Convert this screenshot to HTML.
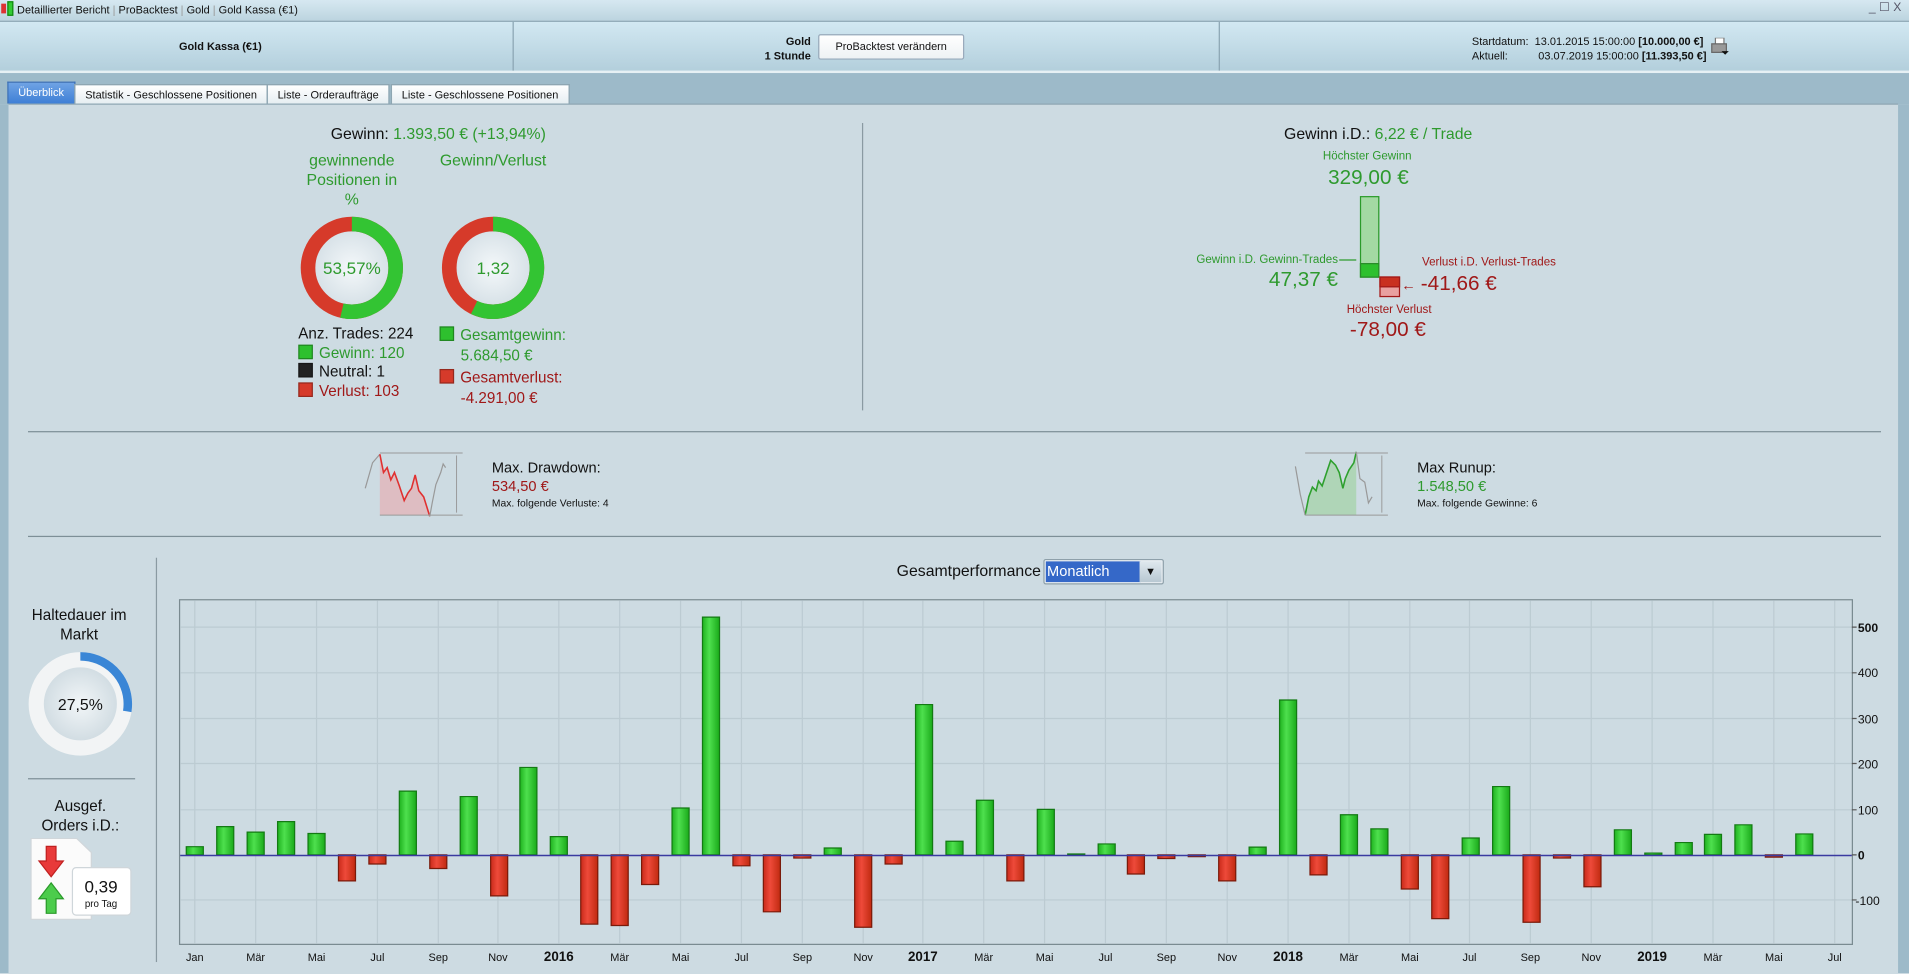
<!DOCTYPE html>
<html><head><meta charset="utf-8">
<style>
html,body{margin:0;padding:0;width:1909px;height:973px;overflow:hidden;background:#cddbe2}
#s{position:absolute;left:0;top:0;width:1568px;height:799px;transform:scale(1.21747,1.21777);transform-origin:0 0;font-family:"Liberation Sans",Arial,sans-serif;color:#111;background:#cddbe2}
.a{position:absolute;white-space:nowrap}
.g{color:#2e9a2e}.r{color:#a01818}
.c{transform:translateX(-50%);text-align:center}
.tab{position:absolute;top:69px;height:16px;font-size:9px;line-height:16px;padding:0 8px;background:linear-gradient(#fff,#e6eef2);border:1px solid #8ea6b2;border-bottom:none;box-sizing:border-box}
.sq{display:inline-block;width:12px;height:12px;vertical-align:-1px;margin-right:5px;border:1px solid rgba(0,0,0,.3);box-sizing:border-box}
</style></head><body>
<div id="s">
<div class="a" style="left:0;top:0;width:1568px;height:17px;background:linear-gradient(#d6e8f1,#bcd4df);border-bottom:1px solid #8aa4b2"></div>
<div class="a" style="left:1px;top:3px;width:4px;height:8px;background:#d33"></div>
<div class="a" style="left:6px;top:1px;width:5px;height:12px;border:1px solid #181;background:#3c3;box-sizing:border-box"></div>
<div class="a" style="left:14px;top:3px;font-size:9px">Detaillierter Bericht <span style="color:#999">|</span> ProBacktest <span style="color:#999">|</span> Gold <span style="color:#999">|</span> Gold Kassa (€1)</div>
<div class="a" style="left:1535px;top:1px;font-size:10px;color:#556">_ ☐ X</div>
<div class="a" style="left:0;top:18px;width:1568px;height:40px;background:linear-gradient(#d2e8f2,#b3cfdc);border-bottom:2px solid #e6f0f4"></div>
<div class="a" style="left:421px;top:18px;width:1px;height:40px;background:#8aa4b2"></div>
<div class="a" style="left:1001px;top:18px;width:1px;height:40px;background:#8aa4b2"></div>
<div class="a c" style="left:181px;top:33px;font-size:9px;font-weight:bold">Gold Kassa (€1)</div>
<div class="a" style="left:628px;top:28px;font-size:9px;font-weight:bold;text-align:right;line-height:12px">Gold<br>1 Stunde</div>
<div class="a" style="left:672px;top:28px;width:118px;height:19px;border:1px solid #9ab;border-radius:2px;background:linear-gradient(#fff,#eef2f4);font-size:9px;line-height:19px;text-align:center">ProBacktest verändern</div>
<div class="a" style="left:1209px;top:28px;font-size:9px;line-height:12px">Startdatum:&nbsp; 13.01.2015 15:00:00 <b>[10.000,00 €]</b><br>Aktuell:&nbsp;&nbsp;&nbsp;&nbsp;&nbsp;&nbsp;&nbsp;&nbsp;&nbsp; 03.07.2019 15:00:00 <b>[11.393,50 €]</b></div>
<svg class="a" style="left:1405px;top:31px" width="16" height="16"><rect x="4" y="0" width="7" height="6" fill="#fff" stroke="#777"/><rect x="1" y="5" width="12" height="7" fill="#999" stroke="#666"/><path d="M9 11h6l-3 3z" fill="#111"/></svg>
<div class="a" style="left:0;top:60px;width:1568px;height:26px;background:#9dbac9"></div>
<div class="a" style="left:0;top:86px;width:7px;height:713px;background:#9dbac9"></div>
<div class="a" style="left:1559px;top:86px;width:9px;height:713px;background:#9dbac9"></div>
<div class="tab" style="left:6px;top:67px;height:18px;background:linear-gradient(#6fa3e4,#3e7fd6);color:#fff;border-color:#3a6fb8">Überblick</div>
<div class="tab" style="left:61px">Statistik - Geschlossene Positionen</div>
<div class="tab" style="left:219px">Liste - Orderaufträge</div>
<div class="tab" style="left:321px">Liste - Geschlossene Positionen</div>
<div class="a" style="left:7px;top:85px;width:1552px;height:714px;background:#cddbe2;border-top:1px solid #8ea6b2"></div>

<div class="a c" style="left:360px;top:102px;font-size:13px">Gewinn: <span class="g">1.393,50 € (+13,94%)</span></div>
<div class="a c g" style="left:289px;top:124px;font-size:13px;line-height:16px">gewinnende<br>Positionen in<br>%</div>
<div class="a c g" style="left:405px;top:124px;font-size:13px">Gewinn/Verlust</div>
<svg class="a" style="left:240px;top:171px" width="220" height="100">
<defs><radialGradient id="in"><stop offset="0" stop-color="#f4f8fa"/><stop offset="1" stop-color="#d8e2e8"/></radialGradient></defs>
<g transform="translate(49,49)">
<circle r="30" fill="url(#in)"/>
<circle r="36" fill="none" stroke="#d63a2a" stroke-width="12"/>
<circle r="36" fill="none" stroke="#33c433" stroke-width="12" stroke-dasharray="121.2 300" transform="rotate(-90)"/>
<text y="5" text-anchor="middle" font-size="14" fill="#2e9a2e" font-family="Liberation Sans">53,57%</text></g>
<g transform="translate(165,49)">
<circle r="30" fill="url(#in)"/>
<circle r="36" fill="none" stroke="#d63a2a" stroke-width="12"/>
<circle r="36" fill="none" stroke="#33c433" stroke-width="12" stroke-dasharray="129 300" transform="rotate(-90)"/>
<text y="5" text-anchor="middle" font-size="14" fill="#2e9a2e" font-family="Liberation Sans">1,32</text></g>
</svg>
<div class="a" style="left:245px;top:267px;font-size:12.5px;line-height:15.7px">Anz. Trades: 224<br><span class="sq" style="background:#2ec02e"></span><span class="g">Gewinn: 120</span><br><span class="sq" style="background:#222"></span>Neutral: 1<br><span class="sq" style="background:#d63a2a"></span><span class="r">Verlust: 103</span></div>
<div class="a" style="left:361px;top:267px;font-size:12.5px;line-height:16.5px"><span class="sq" style="background:#2ec02e"></span><span class="g">Gesamtgewinn:</span><br><span class="g">&nbsp;&nbsp;&nbsp;&nbsp;&nbsp;5.684,50 €</span></div>
<div class="a" style="left:361px;top:302px;font-size:12.5px;line-height:16.5px"><span class="sq" style="background:#d63a2a"></span><span class="r">Gesamtverlust:</span><br><span class="r">&nbsp;&nbsp;&nbsp;&nbsp;&nbsp;-4.291,00 €</span></div>
<div class="a" style="left:708px;top:101px;width:1px;height:236px;background:#8a9aa2"></div>

<div class="a c" style="left:1132px;top:102px;font-size:13px">Gewinn i.D.: <span class="g">6,22 € / Trade</span></div>
<div class="a c g" style="left:1123px;top:123px;font-size:9.5px">Höchster Gewinn</div>
<div class="a c g" style="left:1124px;top:136px;font-size:17px">329,00 €</div>
<div class="a" style="left:1117px;top:161px;width:16px;height:67px;background:#a3d9a3;border:1px solid #2a9a2a;box-sizing:border-box"></div>
<div class="a" style="left:1117px;top:216px;width:16px;height:12px;background:#2ec02e;border:1px solid #2a8a2a;box-sizing:border-box"></div>
<div class="a" style="left:1133px;top:227px;width:17px;height:17px;background:#e9a0a0;border:1px solid #a01818;box-sizing:border-box"></div>
<div class="a" style="left:1133px;top:227px;width:17px;height:9px;background:#c93020;border:1px solid #a01818;box-sizing:border-box"></div>
<div class="a g" style="right:469px;top:208px;font-size:9.5px">Gewinn i.D. Gewinn-Trades</div>
<div class="a" style="left:1100px;top:213px;width:14px;height:1px;background:#2a9a2a"></div>
<div class="a g" style="right:469px;top:220px;font-size:17px">47,37 €</div>
<div class="a r" style="left:1168px;top:210px;font-size:9.5px">Verlust i.D. Verlust-Trades</div>
<div class="a r" style="left:1151px;top:227px;font-size:12px">←</div>
<div class="a r" style="left:1167px;top:223px;font-size:17px">-41,66 €</div>
<div class="a c r" style="left:1141px;top:249px;font-size:9.5px">Höchster Verlust</div>
<div class="a c r" style="left:1140px;top:261px;font-size:17px">-78,00 €</div>

<div class="a" style="left:23px;top:354px;width:1522px;height:1px;background:#7d8f97"></div>
<div class="a" style="left:23px;top:440px;width:1522px;height:1px;background:#7d8f97"></div>

<svg class="a" style="left:298px;top:368px" width="100" height="60">
<path d="M14 5 L17 20 L20 16 L23 26 L26 20 L30 31 L34 43 L37 37 L40 33 L43 22 L46 35 L50 40 L55 55 L14 55 Z" fill="#e1b7bc" opacity=".85"/>
<path d="M2 33 L8 12 L14 5" fill="none" stroke="#999" stroke-width="1"/>
<path d="M14 5 L17 20 L20 16 L23 26 L26 20 L30 31 L34 43 L37 37 L40 33 L43 22 L46 35 L50 40 L55 56" fill="none" stroke="#e03030" stroke-width="1.3"/>
<path d="M55 56 L57 45 L60 30 L64 20 L66 13 L68 16" fill="none" stroke="#999" stroke-width="1"/>
<path d="M14 4 H82 M14 55 H82 M77 6 V53" stroke="#999" fill="none" stroke-width=".8"/>
</svg>
<div class="a" style="left:404px;top:377px;font-size:12px">Max. Drawdown:</div>
<div class="a r" style="left:404px;top:392px;font-size:12px">534,50 €</div>
<div class="a" style="left:404px;top:408px;font-size:8.5px">Max. folgende Verluste: 4</div>

<svg class="a" style="left:1058px;top:368px" width="100" height="60">
<path d="M14 55 L17 40 L20 32 L23 35 L25 27 L28 31 L31 22 L35 10 L39 14 L42 20 L45 33 L47 25 L50 18 L54 12 L56 3 L56 55 Z" fill="#a8d3ad" opacity=".8"/>
<path d="M14 55 L17 40 L20 32 L23 35 L25 27 L28 31 L31 22 L35 10 L39 14 L42 20 L45 33 L47 25 L50 18 L54 12 L56 3" fill="none" stroke="#2ea02e" stroke-width="1.3"/>
<path d="M56 3 L59 25 L63 28 L66 45 L69 40 M6 15 L10 38 L14 55" fill="none" stroke="#999" stroke-width="1"/>
<path d="M14 4 H82 M14 55 H82 M77 6 V53" stroke="#999" fill="none" stroke-width=".8"/>
</svg>
<div class="a" style="left:1164px;top:377px;font-size:12px">Max Runup:</div>
<div class="a g" style="left:1164px;top:392px;font-size:12px">1.548,50 €</div>
<div class="a" style="left:1164px;top:408px;font-size:8.5px">Max. folgende Gewinne: 6</div>

<div class="a" style="left:128px;top:458px;width:1px;height:332px;background:#8a9aa2"></div>
<div class="a c" style="left:65px;top:497px;font-size:12.5px;line-height:16px">Haltedauer im<br>Markt</div>
<svg class="a" style="left:22px;top:534px" width="90" height="90">
<defs><radialGradient id="in2"><stop offset="0" stop-color="#f2f6f8"/><stop offset="1" stop-color="#d2dde3"/></radialGradient></defs>
<g transform="translate(44,44)">
<circle r="36" fill="none" stroke="#f2f4f5" stroke-width="13"/>
<circle r="30" fill="url(#in2)"/>
<circle r="39" fill="none" stroke="#3a86d6" stroke-width="7" stroke-dasharray="67.4 300" transform="rotate(-90)"/>
<text y="5" text-anchor="middle" font-size="13" fill="#111" font-family="Liberation Sans">27,5%</text></g></svg>
<div class="a" style="left:23px;top:639px;width:88px;height:1px;background:#7d8f97"></div>
<div class="a c" style="left:66px;top:654px;font-size:12.5px;line-height:16px">Ausgef.<br>Orders i.D.:</div>
<svg class="a" style="left:25px;top:688px" width="86" height="70">
<path d="M0.5 0.5 H38 L50 12 V67 H0.5 Z" fill="#fbfbfb" stroke="#d0d6da"/>
<path d="M13 7 H21 V19 H27 L17 32 L7 19 H13 Z" fill="#e83a3a" stroke="#c02020"/>
<path d="M13 62 H21 V50 H27 L17 37 L7 50 H13 Z" fill="#4ccc4c" stroke="#2a9a2a"/>
<rect x="34.5" y="24.5" width="48" height="39" rx="3" fill="#fff" stroke="#cfd6da"/>
<text x="58" y="45" text-anchor="middle" font-size="14" fill="#111" font-family="Liberation Sans">0,39</text>
<text x="58" y="57" text-anchor="middle" font-size="8" fill="#111" font-family="Liberation Sans">pro Tag</text>
</svg>

<div class="a" style="right:713px;top:461px;font-size:13px">Gesamtperformance</div>
<div class="a" style="left:857px;top:459px;width:99px;height:21px;border:1px solid #8ea0aa;border-radius:2px;background:#e8eef2;box-sizing:border-box"></div>
<div class="a" style="left:859px;top:461px;width:77px;height:17px;background:#3568c8;color:#fff;font-size:12px;line-height:17px;padding-left:1px">Monatlich</div>
<div class="a" style="left:936px;top:461px;width:18px;height:17px;background:linear-gradient(#dfe8ee,#b8c8d2);font-size:9px;line-height:17px;text-align:center">▼</div>

<svg class="a" style="left:0;top:0" width="1568" height="799">
<defs>
<linearGradient id="gg" x1="0" x2="1"><stop offset="0" stop-color="#1fb21f"/><stop offset=".4" stop-color="#4ee04e"/><stop offset="1" stop-color="#1aaa1a"/></linearGradient>
<linearGradient id="rg" x1="0" x2="1"><stop offset="0" stop-color="#c92a1a"/><stop offset=".4" stop-color="#ee4a3a"/><stop offset="1" stop-color="#c02a10"/></linearGradient>
</defs>
<rect x="147.5" y="492.5" width="1374" height="283" fill="#cddbe2" stroke="#7a8a90"/>
<g stroke="#bccbd2" stroke-width="1">
<path d="M148 515H1521M148 552.5H1521M148 590H1521M148 627H1521M148 665H1521M148 739H1521"/>
<path d="M160 493V775M210 493V775M260 493V775M310 493V775M360 493V775M409 493V775M459 493V775M509 493V775M559 493V775M609 493V775M659 493V775M709 493V775M758 493V775M808 493V775M858 493V775M908 493V775M958 493V775M1008 493V775M1058 493V775M1108 493V775M1158 493V775M1207 493V775M1257 493V775M1307 493V775M1357 493V775M1407 493V775M1457 493V775M1507 493V775"/>
</g>
<g transform="translate(0,702) scale(1,-0.374)" stroke-width="1">
<g fill="url(#gg)" stroke="#137a13">
<rect vector-effect="non-scaling-stroke" x="153" y="0" width="14" height="18"/>
<rect vector-effect="non-scaling-stroke" x="178" y="0" width="14" height="62"/>
<rect vector-effect="non-scaling-stroke" x="203" y="0" width="14" height="50"/>
<rect vector-effect="non-scaling-stroke" x="228" y="0" width="14" height="73"/>
<rect vector-effect="non-scaling-stroke" x="253" y="0" width="14" height="47"/>
<rect vector-effect="non-scaling-stroke" x="328" y="0" width="14" height="140"/>
<rect vector-effect="non-scaling-stroke" x="378" y="0" width="14" height="128"/>
<rect vector-effect="non-scaling-stroke" x="427" y="0" width="14" height="192"/>
<rect vector-effect="non-scaling-stroke" x="452" y="0" width="14" height="40"/>
<rect vector-effect="non-scaling-stroke" x="552" y="0" width="14" height="103"/>
<rect vector-effect="non-scaling-stroke" x="577" y="0" width="14" height="522"/>
<rect vector-effect="non-scaling-stroke" x="677" y="0" width="14" height="15"/>
<rect vector-effect="non-scaling-stroke" x="752" y="0" width="14" height="330"/>
<rect vector-effect="non-scaling-stroke" x="777" y="0" width="14" height="30"/>
<rect vector-effect="non-scaling-stroke" x="802" y="0" width="14" height="120"/>
<rect vector-effect="non-scaling-stroke" x="852" y="0" width="14" height="100"/>
<rect vector-effect="non-scaling-stroke" x="877" y="0" width="14" height="2"/>
<rect vector-effect="non-scaling-stroke" x="902" y="0" width="14" height="24"/>
<rect vector-effect="non-scaling-stroke" x="1026" y="0" width="14" height="17"/>
<rect vector-effect="non-scaling-stroke" x="1051" y="0" width="14" height="340"/>
<rect vector-effect="non-scaling-stroke" x="1101" y="0" width="14" height="88"/>
<rect vector-effect="non-scaling-stroke" x="1126" y="0" width="14" height="57"/>
<rect vector-effect="non-scaling-stroke" x="1201" y="0" width="14" height="37"/>
<rect vector-effect="non-scaling-stroke" x="1226" y="0" width="14" height="150"/>
<rect vector-effect="non-scaling-stroke" x="1326" y="0" width="14" height="55"/>
<rect vector-effect="non-scaling-stroke" x="1351" y="0" width="14" height="4"/>
<rect vector-effect="non-scaling-stroke" x="1376" y="0" width="14" height="27"/>
<rect vector-effect="non-scaling-stroke" x="1400" y="0" width="14" height="45"/>
<rect vector-effect="non-scaling-stroke" x="1425" y="0" width="14" height="66"/>
<rect vector-effect="non-scaling-stroke" x="1475" y="0" width="14" height="46"/>
</g>
<g fill="url(#rg)" stroke="#7a1a0a">
<rect vector-effect="non-scaling-stroke" x="278" y="-57" width="14" height="57"/>
<rect vector-effect="non-scaling-stroke" x="303" y="-20" width="14" height="20"/>
<rect vector-effect="non-scaling-stroke" x="353" y="-30" width="14" height="30"/>
<rect vector-effect="non-scaling-stroke" x="403" y="-90" width="14" height="90"/>
<rect vector-effect="non-scaling-stroke" x="477" y="-152" width="14" height="152"/>
<rect vector-effect="non-scaling-stroke" x="502" y="-155" width="14" height="155"/>
<rect vector-effect="non-scaling-stroke" x="527" y="-65" width="14" height="65"/>
<rect vector-effect="non-scaling-stroke" x="602" y="-24" width="14" height="24"/>
<rect vector-effect="non-scaling-stroke" x="627" y="-125" width="14" height="125"/>
<rect vector-effect="non-scaling-stroke" x="652" y="-7" width="14" height="7"/>
<rect vector-effect="non-scaling-stroke" x="702" y="-159" width="14" height="159"/>
<rect vector-effect="non-scaling-stroke" x="727" y="-20" width="14" height="20"/>
<rect vector-effect="non-scaling-stroke" x="827" y="-57" width="14" height="57"/>
<rect vector-effect="non-scaling-stroke" x="926" y="-42" width="14" height="42"/>
<rect vector-effect="non-scaling-stroke" x="951" y="-8" width="14" height="8"/>
<rect vector-effect="non-scaling-stroke" x="976" y="-4" width="14" height="4"/>
<rect vector-effect="non-scaling-stroke" x="1001" y="-57" width="14" height="57"/>
<rect vector-effect="non-scaling-stroke" x="1076" y="-44" width="14" height="44"/>
<rect vector-effect="non-scaling-stroke" x="1151" y="-75" width="14" height="75"/>
<rect vector-effect="non-scaling-stroke" x="1176" y="-140" width="14" height="140"/>
<rect vector-effect="non-scaling-stroke" x="1251" y="-148" width="14" height="148"/>
<rect vector-effect="non-scaling-stroke" x="1276" y="-7" width="14" height="7"/>
<rect vector-effect="non-scaling-stroke" x="1301" y="-70" width="14" height="70"/>
<rect vector-effect="non-scaling-stroke" x="1450" y="-5" width="14" height="5"/>
</g>
</g>
<path d="M148 702.5H1521" stroke="#3a3aa0" stroke-width="1.2"/>
<g font-family="Liberation Sans" font-size="10" fill="#111">
<text x="1526" y="519" font-weight="bold">500</text>
<text x="1526" y="556">400</text>
<text x="1526" y="594">300</text>
<text x="1526" y="631">200</text>
<text x="1526" y="669">100</text>
<text x="1526" y="706" font-weight="bold">0</text>
<text x="1524" y="743">-100</text>
</g>
<path d="M1521 515h4M1521 552.5h4M1521 590h4M1521 627h4M1521 665h4M1521 702h4M1521 739h4" stroke="#555"/>
<g font-family="Liberation Sans" font-size="9" fill="#111" text-anchor="middle">
<text x="160" y="789">Jan</text><text x="210" y="789">Mär</text><text x="260" y="789">Mai</text><text x="310" y="789">Jul</text><text x="360" y="789">Sep</text><text x="409" y="789">Nov</text>
<text x="459" y="789" font-size="11" font-weight="bold">2016</text>
<text x="509" y="789">Mär</text><text x="559" y="789">Mai</text><text x="609" y="789">Jul</text><text x="659" y="789">Sep</text><text x="709" y="789">Nov</text>
<text x="758" y="789" font-size="11" font-weight="bold">2017</text>
<text x="808" y="789">Mär</text><text x="858" y="789">Mai</text><text x="908" y="789">Jul</text><text x="958" y="789">Sep</text><text x="1008" y="789">Nov</text>
<text x="1058" y="789" font-size="11" font-weight="bold">2018</text>
<text x="1108" y="789">Mär</text><text x="1158" y="789">Mai</text><text x="1207" y="789">Jul</text><text x="1257" y="789">Sep</text><text x="1307" y="789">Nov</text>
<text x="1357" y="789" font-size="11" font-weight="bold">2019</text>
<text x="1407" y="789">Mär</text><text x="1457" y="789">Mai</text><text x="1507" y="789">Jul</text>
</g>
</svg>
</div>
</body></html>
